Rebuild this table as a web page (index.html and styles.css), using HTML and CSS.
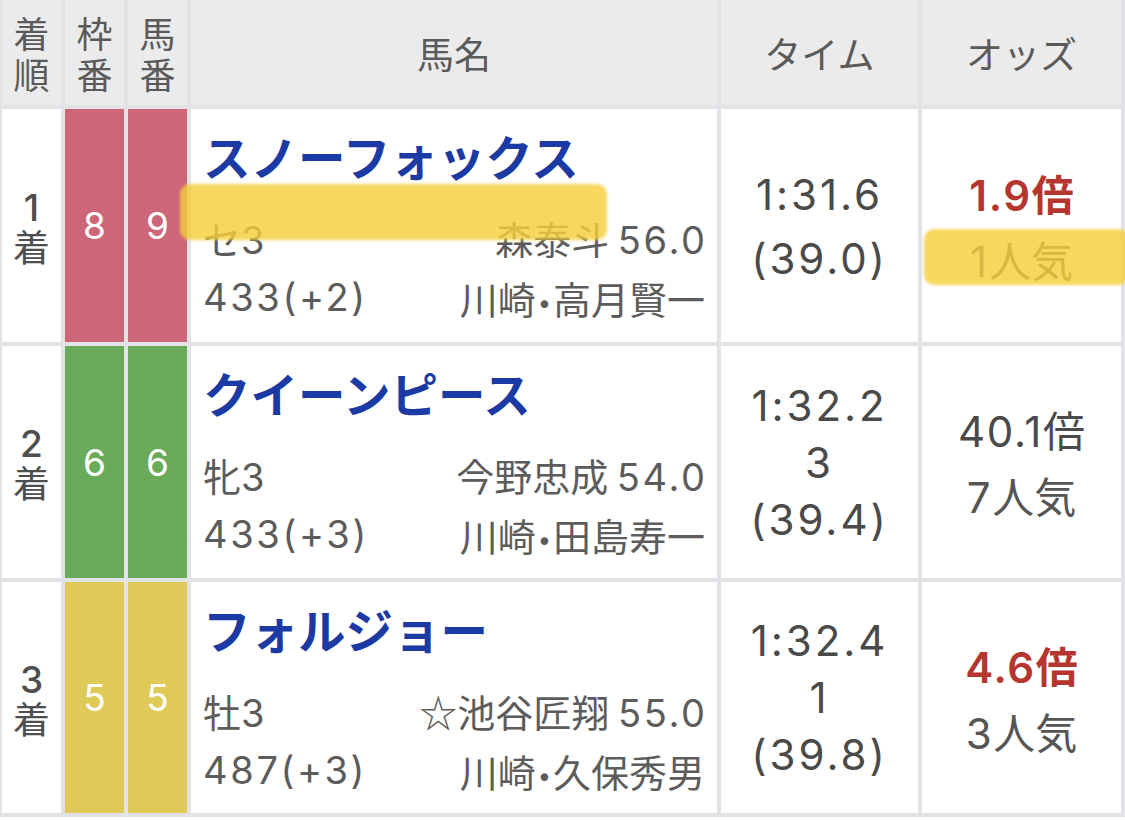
FILE: index.html
```html
<!DOCTYPE html>
<html lang="ja">
<head>
<meta charset="utf-8">
<title>レース結果</title>
<link rel="stylesheet" href="styles.css">
</head>
<body>
<div class="wrap">
  <div class="table">
    <div class="th stack"><div>着</div><div>順</div></div>
    <div class="th stack"><div>枠</div><div>番</div></div>
    <div class="th stack"><div>馬</div><div>番</div></div>
    <div class="th">馬名</div>
    <div class="th">タイム</div>
    <div class="th">オッズ</div>

    <div class="td rank"><div class="num">1</div><div>着</div></div>
    <div class="td frame f8"><span class="num">8</span></div>
    <div class="td frame f8"><span class="num">9</span></div>
    <div class="td horse">
      <div class="name">スノーフォックス</div>
      <div class="meta">
        <span>セ<span class="num">3</span></span>
        <span>森泰斗 <span class="num">56.0</span></span>
        <span class="num">433(+2)</span>
        <span>川崎<span class="dot">•</span>高月賢一</span>
      </div>
    </div>
    <div class="td time"><div class="num">1:31.6</div><div class="num">(39.0)</div></div>
    <div class="td odds"><div class="odd hot"><span class="num">1.9</span>倍</div><div class="pop"><span class="num">1</span>人気</div></div>

    <div class="td rank"><div class="num">2</div><div>着</div></div>
    <div class="td frame f6"><span class="num">6</span></div>
    <div class="td frame f6"><span class="num">6</span></div>
    <div class="td horse">
      <div class="name">クイーンピース</div>
      <div class="meta">
        <span>牝<span class="num">3</span></span>
        <span>今野忠成 <span class="num">54.0</span></span>
        <span class="num">433(+3)</span>
        <span>川崎<span class="dot">•</span>田島寿一</span>
      </div>
    </div>
    <div class="td time time3"><div class="num">1:32.2</div><div class="num">3</div><div class="num">(39.4)</div></div>
    <div class="td odds"><div class="odd"><span class="num">40.1</span>倍</div><div class="pop"><span class="num">7</span>人気</div></div>

    <div class="td rank"><div class="num">3</div><div>着</div></div>
    <div class="td frame f5"><span class="num">5</span></div>
    <div class="td frame f5"><span class="num">5</span></div>
    <div class="td horse">
      <div class="name">フォルジョー</div>
      <div class="meta">
        <span>牡<span class="num">3</span></span>
        <span>☆池谷匠翔 <span class="num">55.0</span></span>
        <span class="num">487(+3)</span>
        <span>川崎<span class="dot">•</span>久保秀男</span>
      </div>
    </div>
    <div class="td time time3"><div class="num">1:32.4</div><div class="num">1</div><div class="num">(39.8)</div></div>
    <div class="td odds"><div class="odd hot"><span class="num">4.6</span>倍</div><div class="pop"><span class="num">3</span>人気</div></div>
  </div>
  <div class="marker marker-a"></div>
  <div class="marker marker-b"></div>
</div>
</body>
</html>
```

FILE: styles.css
```css
html, body {
  margin: 0;
  padding: 0;
  background: #ffffff;
}

body {
  width: 1125px;
  height: 822px;
  overflow: hidden;
  font-family: "Noto Sans CJK JP", sans-serif;
  color: #555555;
}

.wrap {
  position: relative;
}

.table {
  display: grid;
  grid-template-columns: 59px 59px 59px 526px 197px 199px;
  grid-template-rows: 105px 233px 232px 231px;
  gap: 4px;
  padding: 0 4px 4px 2px;
  background: #e2e2e7;
  width: 1125px;
  box-sizing: border-box;
}

.num {
  font-family: "Inter", "Noto Sans CJK JP", sans-serif;
  letter-spacing: 0.07em;
}

.th {
  background: #ebebeb;
  display: flex;
  align-items: center;
  justify-content: center;
  text-align: center;
  font-size: 37px;
  color: #5a5a5a;
  line-height: 40px;
}

.stack {
  flex-direction: column;
  font-size: 36px;
  line-height: 41px;
  padding-top: 1px;
}

.td {
  background: #ffffff;
  display: flex;
  flex-direction: column;
  align-items: center;
  justify-content: center;
  text-align: center;
}

.rank {
  font-size: 37px;
  line-height: 39px;
  color: #4e4e4e;
  padding-top: 2px;
}

.rank .num {
  letter-spacing: 0;
  font-weight: 500;
}

.frame {
  color: #ffffff;
  font-size: 37px;
}

.frame .num {
  letter-spacing: 0;
}

.f8 { background: #cd6679; }
.f6 { background: #6aab5a; }
.f5 { background: #dfca57; }

.horse {
  display: block;
  text-align: left;
  padding: 17px 12px 0 12px;
}

.name {
  font-size: 47.5px;
  font-weight: 700;
  color: #1c3aa3;
  line-height: 60px;
  white-space: nowrap;
}

.meta {
  margin-top: 23px;
  display: grid;
  grid-template-columns: auto auto;
  justify-content: space-between;
  font-size: 38px;
  line-height: 57px;
  color: #5c5c5c;
  white-space: nowrap;
}

.meta > span:nth-child(even) {
  text-align: right;
}

.meta > span:nth-child(even) .num {
  margin-right: -0.07em;
}

.dot {
  font-family: "DejaVu Sans", sans-serif;
  font-size: 26px;
  margin: 0 1px;
}

.time {
  font-size: 42px;
  line-height: 64px;
  color: #4a4a4a;
  padding-top: 2px;
}

.time3 {
  line-height: 57px;
  padding-top: 0;
}

.odds {
  font-size: 42px;
  line-height: 63px;
  color: #4a4a4a;
  padding-top: 2px;
}

.odds .num {
  letter-spacing: 0.04em;
}

.odd.hot {
  color: #b5352f;
  font-weight: 600;
}

.pop {
  color: #555555;
}

.marker {
  position: absolute;
  background: rgba(246, 206, 60, 0.82);
  border-radius: 10px;
  filter: blur(1.5px);
}

.marker-a {
  left: 180px;
  top: 184px;
  width: 427px;
  height: 56px;
}

.marker-b {
  left: 924px;
  top: 229px;
  width: 205px;
  height: 56px;
}
```
